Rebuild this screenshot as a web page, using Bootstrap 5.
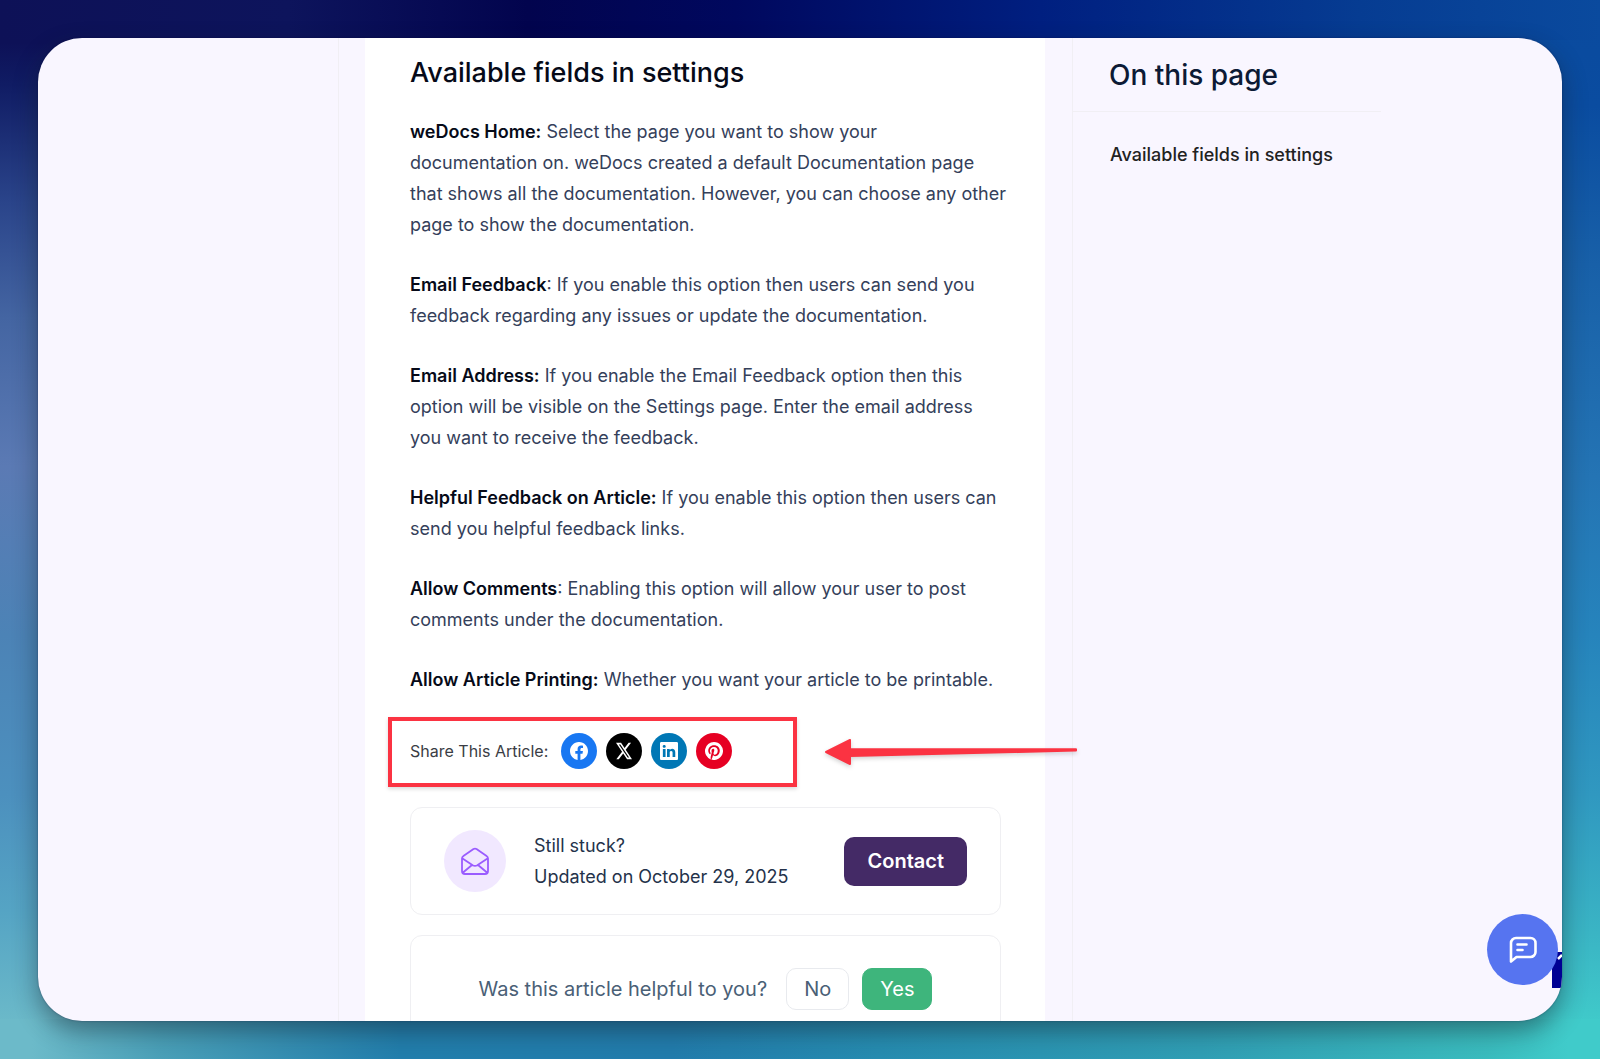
<!DOCTYPE html>
<html lang="en">
<head>
<meta charset="utf-8">
<meta name="viewport" content="width=device-width, initial-scale=1">
<title>weDocs – Available fields in settings</title>
<link href="https://cdn.jsdelivr.net/npm/bootstrap@5.3.0/dist/css/bootstrap.min.css" rel="stylesheet">
<style>
  body {
    font-family: Inter, "Liberation Sans", sans-serif;
    font-size: 18px;
    line-height: 31px;
    color: #34405a;
  }
  /* Backdrop: one gradient per edge of the window */
  .stage {
    height: 100vh;
    padding: 38px;
    background:
      linear-gradient(90deg, #0d1157 0%, #0d145c 18%, #02044e 33%, #00085e 46%, #001f80 65%, #063c92 85%, #0a4a9e 100%) top / 100% 40px no-repeat,
      linear-gradient(90deg, #6cbac9 0%, #6cbac9 2%, #4aa0b8 10%, #227eac 25%, #227cac 42%, #268cb0 55%, #309eb4 75%, #3abcbe 93%, #40cbca 98%, #40cbca 100%) bottom / 100% 40px no-repeat,
      linear-gradient(180deg, #0d1157 0%, #0d1157 4%, #101c64 8%, #2a448a 19%, #4465a2 30%, #5b7ab4 44%, #4c83b6 60%, #4c90be 75%, #55a4c4 86%, #6cbac9 97%) left / 90px 100% no-repeat,
      linear-gradient(180deg, #0a4a9e 0%, #0a4ca0 10%, #1860a8 25%, #2474b4 45%, #2684bc 60%, #3098c0 75%, #3ab4c4 88%, #40cbca 97%) right / 90px 100% no-repeat,
      #227cac;
  }
  .panel {
    display: grid;
    grid-template-columns: 301fr 733fr 490fr;
    grid-template-rows: minmax(0, 100%);
    border-radius: 44px;
    background: #f9f6ff;
    box-shadow: 0 10px 24px rgba(20, 30, 40, .45), 0 0 2px rgba(0, 0, 60, .4);
    overflow: hidden;
  }
  .side-l { border-right: 1px solid #f1eff4; }
  .side-r { border-left: 1px solid #f1eff4; }
  .article { margin: 0 27px 0 26px; padding: 15px 44px 0 45px; background: #fff; min-width: 0; }
  .article h2, .side-r h2 { font-size: 27px; line-height: 40px; font-weight: 500; color: #060a18; margin: 0; }
  .side-r h2 { font-size: 28px; color: #0c1a35; padding: 17px 36px 16px; border-bottom: 1px solid #f1eff4; width: 308px; }
  .body-copy { padding-top: 23px; margin-right: -7px; }
  .body-copy p { margin: 0 0 29px; }
  .body-copy p:last-child { margin: 0; }
  .body-copy strong { font-weight: 600; color: #060a18; }
  .toc { padding: 27px 37px; }
  .toc a { color: #222; text-decoration: none; font-weight: 500; }

  .share {
    width: 409px; height: 70px;
    margin: 22px 0 20px -22px;
    padding: 0 0 2px 18px;
    border: 4px solid #fb3342;
    box-shadow: 0 2px 4px rgba(0, 0, 0, .15);
    font-size: 16px; color: #3a3d44;
  }
  .share-links { gap: 9px; margin-left: 13px; }
  .share-links a { width: 36px; height: 36px; }
  .fb { background: #1877f2; }
  .tw { background: #000; }
  .li { background: #0077b5; }
  .pin { background: #e60023; }
  .arrow { left: calc(100% + 28px); top: 14px; filter: drop-shadow(0 2px 2px rgba(0, 0, 0, .18)); }

  .box { border: 1px solid #efeff2; border-radius: 12px; }
  .stuck { height: 108px; padding: 0 33px; margin-bottom: 20px; color: #24324a; }
  .mail { width: 62px; height: 62px; background: #f1e8ff; margin-right: 28px; }
  .btn-contact, .btn-contact:hover { background: #442a66; color: #fff; font-size: 20px; font-weight: 600; border: 0; border-radius: 10px; padding: 9px 23px; line-height: 31px; }
  .helpful { padding: 32px 20px 40px; gap: 13px; font-size: 20px; color: #4a6076; }
  .helpful .question { margin-right: 6px; }
  .helpful .btn { font-size: 20px; line-height: 30px; padding: 5px 17px; border-radius: 10px; }
  .btn-no { border-color: #e8eaee; color: #4a6076; }
  .btn-yes, .btn-yes:hover { background: #3eb57c; border-color: #3eb57c; color: #fff; }

  .chat { right: 4px; bottom: 36px; width: 71px; height: 71px; background: #5674f0; border: 0; }
  .corner-tab { right: 0; bottom: 33px; width: 10px; height: 36px; background: #000094; }
</style>
</head>
<body>
<div class="stage">
<div class="panel h-100 position-relative">
  <aside class="side-l"></aside>

  <main class="article">
    <h2>Available fields in settings</h2>
    <div class="body-copy">
      <p><strong>weDocs Home:</strong> Select the page you want to show your documentation on. weDocs created a default Documentation page that shows all the documentation. However, you can choose any other page to show the documentation.</p>
      <p><strong>Email Feedback</strong>: If you enable this option then users can send you feedback regarding any issues or update the documentation.</p>
      <p><strong>Email Address:</strong> If you enable the Email Feedback option then this option will be visible on the Settings page. Enter the email address you want to receive the feedback.</p>
      <p><strong>Helpful Feedback on Article:</strong> If you enable this option then users can send you helpful feedback links.</p>
      <p><strong>Allow Comments</strong>: Enabling this option will allow your user to post comments under the documentation.</p>
      <p><strong>Allow Article Printing:</strong> Whether you want your article to be printable.</p>
    </div>

    <div class="share d-flex align-items-center position-relative">
      <span>Share This Article:</span>
      <div class="share-links d-flex">
        <a href="#" class="fb rounded-circle d-flex align-items-center justify-content-center" aria-label="Facebook"><svg width="18" height="18" viewBox="0 0 16 16" fill="#fff"><path d="M16 8.049c0-4.446-3.582-8.05-8-8.05C3.58 0-.002 3.603-.002 8.05c0 4.017 2.926 7.347 6.75 7.951v-5.625h-2.03V8.05H6.75V6.275c0-2.017 1.195-3.131 3.022-3.131.876 0 1.791.157 1.791.157v1.98h-1.009c-.993 0-1.303.621-1.303 1.258v1.51h2.218l-.354 2.326H9.25V16c3.824-.604 6.75-3.934 6.75-7.951"/></svg></a>
        <a href="#" class="tw rounded-circle d-flex align-items-center justify-content-center" aria-label="X"><svg width="16" height="18" viewBox="0 0 16 16" preserveAspectRatio="none" fill="#fff"><path d="M12.6.75h2.454l-5.36 6.142L16 15.25h-4.937l-3.867-5.07-4.425 5.07H.316l5.733-6.57L0 .75h5.063l3.495 4.633L12.601.75Zm-.86 13.028h1.36L4.323 2.145H2.865z"/></svg></a>
        <a href="#" class="li rounded-circle d-flex align-items-center justify-content-center" aria-label="LinkedIn"><svg width="18" height="18" viewBox="0 0 16 16" fill="#fff"><path d="M0 1.146C0 .513.526 0 1.175 0h13.65C15.474 0 16 .513 16 1.146v13.708c0 .633-.526 1.146-1.175 1.146H1.175C.526 16 0 15.487 0 14.854zm4.943 12.248V6.169H2.542v7.225zm-1.2-8.212c.837 0 1.358-.554 1.358-1.248-.015-.709-.52-1.248-1.342-1.248S2.4 3.226 2.4 3.934c0 .694.521 1.248 1.327 1.248zm4.908 8.212V9.359c0-.216.016-.432.08-.586.173-.431.568-.878 1.232-.878.869 0 1.216.662 1.216 1.634v3.865h2.401V9.25c0-2.22-1.184-3.252-2.764-3.252-1.274 0-1.845.7-2.165 1.193v.025h-.016l.016-.025V6.169h-2.4c.03.678 0 7.225 0 7.225z"/></svg></a>
        <a href="#" class="pin rounded-circle d-flex align-items-center justify-content-center" aria-label="Pinterest"><svg width="18" height="18" viewBox="0 0 16 16" fill="#fff"><path d="M8 0a8 8 0 0 0-2.915 15.452c-.07-.633-.134-1.606.027-2.297.146-.625.938-3.977.938-3.977s-.239-.479-.239-1.187c0-1.113.645-1.943 1.448-1.943.682 0 1.012.512 1.012 1.127 0 .686-.437 1.712-.663 2.663-.188.796.4 1.446 1.185 1.446 1.422 0 2.515-1.5 2.515-3.664 0-1.915-1.377-3.254-3.342-3.254-2.276 0-3.612 1.707-3.612 3.471 0 .688.265 1.425.595 1.826a.24.24 0 0 1 .056.23c-.061.252-.196.796-.222.907-.035.146-.116.177-.268.107-1-.465-1.624-1.926-1.624-3.1 0-2.523 1.834-4.84 5.286-4.84 2.775 0 4.932 1.977 4.932 4.62 0 2.757-1.739 4.976-4.151 4.976-.811 0-1.573-.421-1.834-.919l-.498 1.902c-.181.695-.669 1.566-.995 2.097A8 8 0 1 0 8 0"/></svg></a>
      </div>
      <svg class="arrow position-absolute" width="260" height="34" viewBox="0 0 260 34"><path d="M5 17 29 5V14L255 14.200V15.500L29 21V29Z" fill="#fb3342" stroke="#fb3342" stroke-width="2" stroke-linejoin="round"/></svg>
    </div>

    <section class="box stuck d-flex align-items-center">
      <span class="mail rounded-circle d-flex align-items-center justify-content-center">
        <svg width="30" height="30" viewBox="0 0 30 30" fill="none" stroke="#9a5cff" stroke-width="1.800" stroke-linecap="round" stroke-linejoin="round"><path d="M2 12.500V25a3 3 0 0 0 3 3h20a3 3 0 0 0 3-3V12.500a3 3 0 0 0-1.400-2.500L16.500 3a3 3 0 0 0-3 0L3.400 10A3 3 0 0 0 2 12.500ZM2.500 12.500 12.700 19.200a4.500 4.500 0 0 0 4.600 0L27.500 12.500M3 26.500 12 19M27 26.500 18 19"/></svg>
      </span>
      <div>Still stuck?<br>Updated on October 29, 2025</div>
      <button type="button" class="btn btn-contact ms-auto">Contact</button>
    </section>

    <section class="box helpful d-flex align-items-center justify-content-center">
      <span class="question">Was this article helpful to you?</span>
      <button type="button" class="btn btn-no">No</button>
      <button type="button" class="btn btn-yes">Yes</button>
    </section>
  </main>

  <aside class="side-r">
    <h2>On this page</h2>
    <nav class="toc"><a href="#">Available fields in settings</a></nav>
  </aside>

  <svg class="corner-tab position-absolute" viewBox="0 0 10 36"><path d="M6 7 10 3" stroke="#fff" stroke-width="2.500"/></svg>
  <button type="button" class="chat position-absolute rounded-circle d-flex align-items-center justify-content-center p-0" aria-label="Open chat">
    <svg width="28" height="28" viewBox="0 0 28 28" fill="none" stroke="#fff" stroke-width="2.600" stroke-linecap="round" stroke-linejoin="round"><path d="M2 25.500V7a5 5 0 0 1 5-5h14.500a5 5 0 0 1 5 5v9a5 5 0 0 1-5 5H7.500ZM8.500 8.500h9M8.500 14h5"/></svg>
  </button>
</div>
</div>
<script src="https://cdn.jsdelivr.net/npm/bootstrap@5.3.0/dist/js/bootstrap.bundle.min.js"></script>
</body>
</html>
